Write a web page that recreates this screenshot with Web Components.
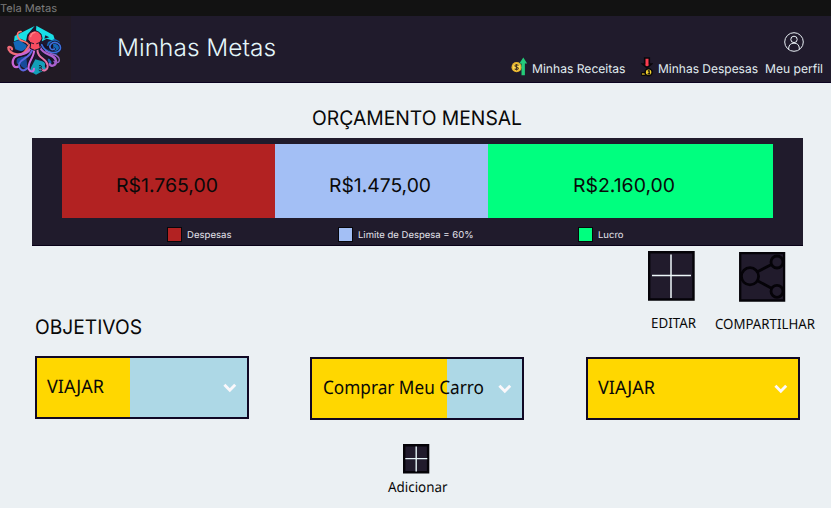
<!DOCTYPE html>
<html lang="pt-BR">
<head>
<meta charset="utf-8">
<title>Tela Metas</title>
<style>
body { margin: 0; width: 831px; height: 508px; overflow: hidden; background: #ebf0f3; font-family: Inter, "Liberation Sans", sans-serif; color: #090909; }
</style>
</head>
<body>
<metas-page></metas-page>
<script>
const define = (name, render) => customElements.define(name, class extends HTMLElement {
  connectedCallback() {
    if (this.shadowRoot) return;
    const root = this.attachShadow({ mode: 'open' });
    root.innerHTML = render(this);
  }
});
const at = (el, name, fallback = '') => el.getAttribute(name) ?? fallback;

// A single line of text set to a fixed measure; its baseline is the bottom of the box.
define('text-line', el => {
  const size = +at(el, 'size'), w = +at(el, 'w'), h = Math.round(size * .75);
  const label = el.textContent.trim();
  return `<style>:host{display:block;flex:none;width:${w}px;height:${h}px}svg{display:block;overflow:visible}
    text{font-size:${size}px;font-weight:${at(el, 'weight', '400')};font-optical-sizing:none;text-rendering:geometricPrecision;fill:currentColor}</style>
    <svg width="${w}" height="${h}"><text x="0" y="${h}" textLength="${w}" lengthAdjust="spacingAndGlyphs">${label}</text></svg>`;
});

define('octopus-logo', () => `
  <style>:host{display:block;flex:none;width:71px;height:66px;background:#211a24}svg{display:block}</style>
  <svg width="71" height="66" viewBox="0 48 213 198" fill="none" stroke-linecap="round" stroke-linejoin="round">
    <path d="M106 78 167 112 170 184 106 222 48 188 46 110Z" fill="#1d1830"/>
    <path d="M44 108 104 78 82 104 78 124 62 116 42 124Z" fill="#18dfe6"/>
    <path d="M109 77 160 105 166 124 140 116 126 124 124 102 108 92Z" fill="#18dfe6"/>
    <path d="M136 106 148 112 133 116Z" fill="#1d1830"/>
    <path d="M164 116 178 124 182 148 168 166 150 164 136 150 144 126Z" fill="#1468b8"/>
    <path d="M40 126 58 120 80 136 76 158 46 148Z" fill="#1468b8"/>
    <path d="M50 174 78 168 84 212 50 190Z" fill="#174a9a"/>
    <path d="M106 178 134 186 138 208 108 224 88 212Z" fill="#139fb8"/>
    <path d="M144 176 168 172 166 192 140 208Z" fill="#1c63b2"/>
    <g stroke="#171226" stroke-width="11">
      <path d="M88 140C76 162 52 168 28 143M94 148C80 172 50 158 42 180 38 196 46 206 58 198M103 147C103 174 82 185 86 207M112 147C112 178 139 172 143 196M120 144C134 166 154 166 160 184 162 198 148 206 140 198M126 138C146 148 158 144 154 136"/>
    </g>
    <path d="M84 132C76 120 62 128 54 112 49 102 55 94 63 95" stroke="#ff7770" stroke-width="5"/>
    <path d="M88 136C74 160 68 164 51 163 35 162 24 152 25 143 28 138 37 143 36 148" stroke="#f06b78" stroke-width="7"/>
    <path d="M92 143C80 170 52 158 42 174 32 192 44 208 57 199" stroke="#c965d2" stroke-width="7"/>
    <path d="M97 148C90 176 65 174 58 190 54 208 70 218 81 205" stroke="#5c67df" stroke-width="6"/>
    <path d="M103 147C103 174 82 185 86 207 91 217 101 218 102 206" stroke="#cc6ce0" stroke-width="6"/>
    <path d="M112 147C112 178 139 172 143 196 144 211 130 216 125 207" stroke="#e275a8" stroke-width="6"/>
    <path d="M120 140C130 170 164 158 168 183 169 197 153 202 149 192" stroke="#ac61cf" stroke-width="7"/>
    <path d="M125 134C137 164 175 162 181 147 184 132 165 120 153 132 145 141 153 153 163 147" stroke="#171226" stroke-width="9"/>
    <path d="M125 134C137 164 175 162 181 147 184 132 165 120 153 132 145 141 153 153 163 147" stroke="#3d70dc" stroke-width="5"/>
    <path d="M137 153C153 165 177 162 178 179 178 190 165 190 162 184" stroke="#9a61c8" stroke-width="4"/>
    <path d="M105 92C91 94 82 105 84 119L92 129 90 145 104 151 121 145 118 129 126 117C126 101 116 94 105 92Z" fill="#f64c60" stroke="#171226" stroke-width="3"/>
    <path d="M92 110C93 103 98 98 105 97" stroke="#ff8588" stroke-width="4"/>
    <path d="m92 128 9 3m17-3-8 3" stroke="#29152d" stroke-width="3"/>
    <path d="M118 197c9-3 9 9 0 7m5 0c8 4 0 13-6 7" stroke="#171226" stroke-width="3"/>
  </svg>`);

const glyphs = {
  income: `<svg width="16" height="20" viewBox="0 0 16 20"><circle cx="5.6" cy="10.2" r="5.1" fill="#e8b52f"/><circle cx="5.6" cy="10.2" r="3.5" fill="#ffda53"/><path d="M7.6 8.4C5.6 7 3.7 8 4 9.2c.4 1.3 3.5.8 3.4 2.3-.2 1.2-2.2 1.3-3.8.2M5.6 7v6.5" fill="none" stroke="#4a351d" stroke-width="1.1"/><path d="m12.3.4 3.8 6.1h-2.2v11.8h-3.4V6.5H8.3Z" fill="#24ca79"/></svg>`,
  expense: `<svg width="12" height="20" viewBox="0 0 12 20"><path d="M3.7 1h4.6v6h2.2L6 10.6 1.6 7h2.1Z" fill="#fb3c50" stroke="#08070b" stroke-width="1.6"/><path d="M.4 15.5h4v3h-4Z" fill="#947b19" stroke="#08070b"/><circle cx="7.6" cy="15.3" r="3.5" fill="#f4d32e" stroke="#08070b" stroke-width="1.5"/><path d="M6.8 13.9h1.4v3M6.6 16.9h2.6" fill="none" stroke="#08070b" stroke-width="1.1"/></svg>`,
  profile: `<svg width="20" height="20" viewBox="0 0 20 20" fill="none" stroke="#e9f0f5" stroke-width="1"><circle cx="10" cy="10" r="9.3"/><circle cx="10" cy="7.4" r="3.2"/><path d="M4.7 17.3V16c.2-3 2-4.8 5.3-4.8s5.1 1.8 5.3 4.8v1.3"/></svg>`,
  plus: `<svg width="47" height="50" viewBox="0 0 47 50"><path fill="#211b2c" stroke="#050308" stroke-width="2.4" d="M1.2 1.2h44.3v47.3H1.2Z"/><path d="M23 3.5V47M4 24.5h39" stroke="#eef8fa" stroke-width="1.5"/></svg>`,
  share: `<svg width="47" height="50" viewBox="0 0 47 50" fill="none" stroke="#050308" stroke-width="2.3"><path fill="#211b2c" d="M1.2 1.2h43.9v47.3H1.2Z"/><g stroke-width="2.8"><circle cx="11" cy="24.3" r="8.6"/><circle cx="38" cy="10" r="6"/><circle cx="38" cy="39.3" r="6"/><path d="m18.5 19.7 14-7.3M18.5 28.8l14 7.4"/></g></svg>`,
  add: `<svg width="27" height="30" viewBox="0 0 27 30"><path fill="#211b2c" stroke="#050308" stroke-width="2.4" d="M1.2 1.2h23.9v27.1H1.2Z"/><path d="M13.2 2.4v25.2M2.3 14.6h22" stroke="#e5f3f6" stroke-width="1.4"/></svg>`,
  chevron: `<svg width="14" height="10" viewBox="0 0 14 10" fill="none" stroke="#fbf8fb" stroke-width="2.9"><path d="m1.4 1.8 5.4 5.4 5.4-5.4"/></svg>`
};
define('ui-glyph', el => `<style>:host{display:block;flex:none}svg{display:block}</style>${glyphs[at(el, 'name')]}`);

define('app-header', () => `
  <style>
    :host{display:flex;box-sizing:border-box;height:67px;background:#201b2c;border-bottom:1px solid #0b0320;color:#e4f6fa}
    .title{padding:21.5px 0 0 46px}
    nav{display:flex;align-items:flex-end;margin-left:auto;padding:0 8.5px 9px 0;color:#e0edf1}
    .link{display:flex;align-items:flex-end}
    .income ui-glyph{margin:0 5px -4px 0}.expense{margin-left:15.5px}.expense ui-glyph{margin:0 5px -4px 0}
    .profile{margin-left:6.5px;display:grid;justify-items:center;gap:12px}
  </style>
  <octopus-logo></octopus-logo>
  <div class="title"><text-line w="159" size="24" weight="350">Minhas Metas</text-line></div>
  <nav>
    <div class="link income"><ui-glyph name="income"></ui-glyph><text-line w="93.5" size="12.2">Minhas Receitas</text-line></div>
    <div class="link expense"><ui-glyph name="expense"></ui-glyph><text-line w="100" size="12.2">Minhas Despesas</text-line></div>
    <div class="profile"><ui-glyph name="profile"></ui-glyph><text-line w="58" size="12.2">Meu perfil</text-line></div>
  </nav>`);

define('budget-segment', el => `
  <style>:host{display:flex;box-sizing:border-box;justify-content:center;padding-top:34px;height:73.5px;background:${at(el, 'color')}}
  text-line{margin-left:${at(el, 'shift', '0')}px}</style>
  <text-line w="102" size="19">${el.textContent}</text-line>`);

define('legend-item', el => `
  <style>:host{display:flex;align-items:center;gap:4.5px}i{box-sizing:border-box;width:15px;height:15px;border:1px solid #08070b;background:${at(el, 'color')}}text-line{color:#e4e4ec}</style>
  <i></i><text-line w="${at(el, 'w')}" size="9.4">${el.textContent}</text-line>`);

define('budget-panel', () => `
  <style>
    :host{display:block;box-sizing:border-box;width:771px;height:108px;margin:13px 0 0 32px;padding:6px 30px 0;background:#201b2c;border-bottom:1px solid #080017}
    .bars{display:grid;grid-template-columns:213px 213.4px 284.6px}
    .legend{display:grid;grid-template-columns:171px 240px auto;padding:9.5px 0 0 105px}
  </style>
  <div class="bars">
    <budget-segment color="#b22222" shift="-3">R$1.765,00</budget-segment>
    <budget-segment color="#a3bff5" shift="-3">R$1.475,00</budget-segment>
    <budget-segment color="#00ff7f" shift="-14">R$2.160,00</budget-segment>
  </div>
  <div class="legend">
    <legend-item color="#b22222" w="44.5">Despesas</legend-item>
    <legend-item color="#a3bff5" w="115.5">Limite de Despesa = 60%</legend-item>
    <legend-item color="#00ff7f" w="25.5">Lucro</legend-item>
  </div>`);

define('icon-action', el => `
  <style>:host{display:grid;justify-items:center;row-gap:${at(el, 'gap')}px;font-family:"Noto Sans",sans-serif}text-line{margin-left:${at(el, 'shift', '0')}px}ui-glyph{margin-right:${at(el, 'inset', '0')}px}</style>
  <ui-glyph name="${at(el, 'icon')}"></ui-glyph><text-line w="${at(el, 'w')}" size="${at(el, 'size')}">${el.textContent}</text-line>`);

define('goal-card', el => `
  <style>
    :host{display:flex;box-sizing:border-box;width:214px;height:63px;border:2px solid #100824;padding:0 10px 0 10.5px;justify-content:space-between;font-family:"Noto Sans",sans-serif;
      background:linear-gradient(90deg,#ffd700 ${at(el, 'done')}px,#add8e6 ${at(el, 'done')}px)}
    text-line{margin-top:21px}ui-glyph{margin-top:25px}
  </style>
  <text-line w="${at(el, 'w')}" size="18.6">${el.textContent}</text-line><ui-glyph name="chevron"></ui-glyph>`);

define('metas-page', () => `
  <style>
    :host{display:block}
    .tab{height:16px;box-sizing:border-box;padding-top:4px;background:#121212;color:#7d7d7d}
    .heading{padding:27px 0 0 312px}
    .tools{display:flex;align-items:flex-start;height:110px;box-sizing:border-box;padding:5px 16.5px 0 35px}
    .objectives{margin:67.5px auto 0 0}
    .edit{margin-right:19px}.share{margin-top:1px}
    .goals{display:flex;gap:61.7px;padding-left:34.6px;align-items:flex-start}
    .goals goal-card+goal-card{margin-top:1px}
    .add{display:flex;justify-content:center;padding:23.5px 0 0 4px}
  </style>
  <div class="tab"><text-line w="57" size="10.8">Tela Metas</text-line></div>
  <app-header></app-header>
  <main>
    <div class="heading"><text-line w="210" size="20">ORÇAMENTO MENSAL</text-line></div>
    <budget-panel></budget-panel>
    <div class="tools">
      <text-line class="objectives" w="107" size="20">OBJETIVOS</text-line>
      <icon-action class="edit" icon="plus" gap="16.3" w="45" size="14" shift="4">EDITAR</icon-action>
      <icon-action class="share" icon="share" inset="4" gap="16" w="100" size="14">COMPARTILHAR</icon-action>
    </div>
    <div class="goals">
      <goal-card done="93.5" w="57">VIAJAR</goal-card>
      <goal-card done="135" w="161">Comprar Meu Carro</goal-card>
      <goal-card done="215" w="57">VIAJAR</goal-card>
    </div>
    <div class="add"><icon-action icon="add" inset="3" gap="7" w="59.5" size="14">Adicionar</icon-action></div>
  </main>`);
</script>
</body>
</html>
